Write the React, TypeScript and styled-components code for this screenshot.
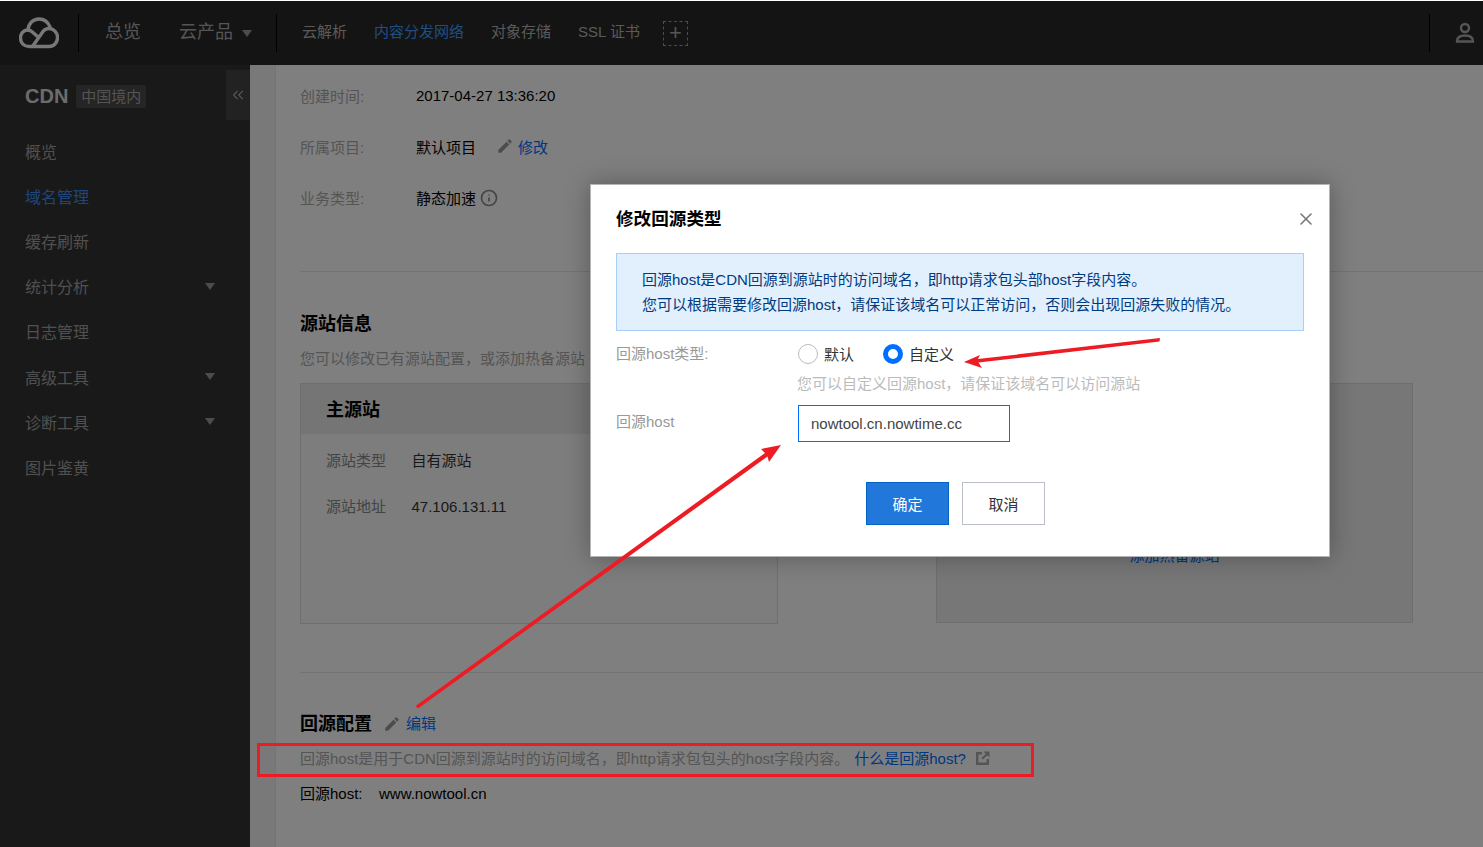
import styled, { createGlobalStyle } from 'styled-components';
import { ChevronsLeft, Info, X } from 'lucide-react';
import { MdEdit } from 'react-icons/md';

const FONT = '"Liberation Sans", "Noto Sans CJK SC", Arial, sans-serif';
const BLUE = '#006eff';

const GlobalStyle = createGlobalStyle`
    html, body {
        margin: 0;
        height: 100%;
        overflow: hidden;
        font-family: ${FONT};
        font-size: 15px;
        background: #fff;
    }
    * { box-sizing: border-box; }
`;

const Page = styled.div`
    width: 1483px;
    height: 847px;
    position: relative;
    display: flex;
    flex-direction: column;
    overflow: hidden;
    padding-top: 1px;
`;

const TopBar = styled.header`
    height: 64px;
    flex: none;
    background: #282828;
    display: flex;
    align-items: center;
    padding-left: 19px;
`;

const Logo = styled.svg`
    width: 40px;
    height: 32px;
    flex: none;
`;

const BarDivider = styled.span`
    width: 1px;
    height: 38px;
    background: #000;
    flex: none;
    margin: ${p => p.$margin};
`;

const PrimaryLink = styled.a`
    font-size: 18px;
    color: #aaa;
    margin-right: ${p => p.$gap || 0}px;
    display: flex;
    align-items: center;
    line-height: 24px;
`;

const PrimaryText = styled.span`
    margin-bottom: 3px;
`;

const SubLink = styled.a`
    font-size: 15px;
    line-height: 22px;
    margin-bottom: 3px;
    color: ${p => (p.$active ? '#3e9cff' : '#b4b4b4')};
    margin-right: 27px;
`;

const Caret = styled.i`
    display: block;
    width: 0;
    height: 0;
    border-left: 5px solid transparent;
    border-right: 5px solid transparent;
    border-top: 7px solid ${p => p.$color || '#999'};
    margin-left: ${p => p.$left || 0}px;
`;

const AddBox = styled.span`
    width: 25px;
    height: 25px;
    border: 1px dashed #999;
    color: #aaa;
    font-size: 22px;
    line-height: 22px;
    text-align: center;
    margin-left: -4px;
`;

const UserIcon = styled.svg`
    width: 20px;
    height: 22px;
    margin: 0 8px 0 25px;
    flex: none;
`;

const Spacer = styled.div`
    flex: 1;
`;

const Body = styled.div`
    flex: 1;
    display: flex;
    min-height: 0;
`;

const Sidebar = styled.aside`
    width: 250px;
    flex: none;
    background: #323232;
    position: relative;
`;

const SideHead = styled.div`
    height: 63px;
    display: flex;
    align-items: center;
    padding-left: 25px;
    gap: 8px;
`;

const SideTitle = styled.b`
    font-size: 20px;
    color: #d8d8d8;
`;

const RegionTag = styled.span`
    background: #4a4a4a;
    color: #a8a8a8;
    font-size: 15px;
    line-height: 23px;
    padding: 0 5px;
    border-radius: 2px;
`;

const Collapse = styled.button`
    position: absolute;
    right: 0;
    top: 5px;
    width: 24px;
    height: 50px;
    border: 0;
    padding: 0;
    background: #444;
    color: #aaa;
    display: flex;
    align-items: center;
    justify-content: center;
`;

const SideMenu = styled.nav`
    display: flex;
    flex-direction: column;
`;

const SideItem = styled.a`
    height: 45.2px;
    display: flex;
    align-items: center;
    justify-content: space-between;
    padding: 0 35px 0 25px;
    font-size: 16px;
    color: ${p => (p.$active ? '#3e8cf0' : '#a0a0a0')};
`;

const Content = styled.main`
    flex: 1;
    display: flex;
    min-width: 0;
    background: #fff;
`;

const Gutter = styled.div`
    width: 26px;
    flex: none;
    background: #f3f3f3;
    border-right: 1px solid #e8e8e8;
`;

const Detail = styled.div`
    flex: 1;
    padding: 19px 0 0 24px;
`;

const Row = styled.div`
    display: flex;
    align-items: center;
    height: 22px;
    margin-bottom: 29px;
    color: #000;
`;

const RowLabel = styled.span`
    width: 116px;
    color: #aaa;
    flex: none;
`;

const EditLink = styled.a`
    color: ${BLUE};
    display: inline-flex;
    align-items: center;
    gap: ${p => p.$gap}px;
    margin-left: ${p => p.$left}px;
    font-size: 15px;
    font-weight: 400;
    svg { color: #999; }
`;

const InfoMark = styled(Info)`
    color: #888;
    margin: 2px 0 0 4px;
`;

const Rule = styled.hr`
    border: 0;
    height: 1px;
    background: #e6e6e6;
    margin: ${p => p.$margin};
`;

const SectionTitle = styled.h2`
    margin: 0;
    font-size: 18px;
    line-height: 26px;
    font-weight: 700;
    color: #000;
    display: flex;
    align-items: center;
`;

const Muted = styled.p`
    margin: ${p => p.$margin};
    line-height: 22px;
    color: #aaa;
    display: flex;
    align-items: center;
`;

const Panels = styled.div`
    display: flex;
    align-items: flex-start;
    gap: 158px;
    margin-top: 13px;
`;

const Panel = styled.section`
    width: ${p => p.$width}px;
    height: ${p => p.$height}px;
    border: 1px solid #ddd;
    background: ${p => p.$tone};
    position: relative;
`;

const PanelHead = styled.div`
    height: 50px;
    background: #ebebeb;
    padding-left: 25px;
    font-size: 18px;
    font-weight: 700;
    line-height: 52px;
    color: #000;
`;

const PanelRows = styled.div`
    padding: 16px 0 0 25px;
    display: flex;
    flex-direction: column;
    gap: 24px;
`;

const PanelRow = styled.div`
    display: flex;
    line-height: 22px;
    color: #333;
`;

const PanelLabel = styled.span`
    width: 85.5px;
    color: #888;
`;

const AddSource = styled.a`
    position: absolute;
    left: 0;
    right: 0;
    top: 161px;
    text-align: center;
    color: ${BLUE};
    line-height: 22px;
`;

const HelpLink = styled.a`
    color: ${BLUE};
    margin-left: 5px;
`;

const External = styled.svg`
    width: 14px;
    height: 14px;
    margin: 0 0 2px 10px;
`;

const HostRow = styled.div`
    margin-top: 13px;
    line-height: 22px;
    color: #000;
    display: flex;
`;

const HostLabel = styled.span`
    width: 79px;
`;

const Mask = styled.div`
    position: absolute;
    inset: 1px 0 0 0;
    background: rgba(0, 0, 0, 0.5);
`;

const Modal = styled.div`
    position: absolute;
    left: 590px;
    top: 184px;
    width: 740px;
    height: 373px;
    background: #fff;
    border: 1px solid #b4b4b4;
    box-shadow: 0 0 24px rgba(0, 0, 0, 0.3);
    padding: 0 25px;
`;

const ModalTitle = styled.h3`
    margin: 0;
    padding-top: 21px;
    font-size: 17.6px;
    line-height: 26px;
    font-weight: 700;
    color: #000;
`;

const CloseBtn = styled.button`
    position: absolute;
    right: 13px;
    top: 24px;
    border: 0;
    padding: 0;
    background: none;
    color: #777;
    display: flex;
`;

const Notice = styled.div`
    margin-top: 21px;
    height: 78px;
    background: #e2effd;
    border: 1px solid #a8d0fb;
    padding: 13px 25px;
    line-height: 25px;
    color: #003b80;
`;

const FormRow = styled.div`
    display: flex;
    margin-top: ${p => p.$top}px;
`;

const FormLabel = styled.label`
    width: 182px;
    flex: none;
    color: #999;
    line-height: ${p => p.$height}px;
`;

const RadioGroup = styled.div`
    display: flex;
    align-items: center;
    height: 22px;
    color: #333;
`;

const Radio = styled.span`
    width: 20px;
    height: 20px;
    border-radius: 50%;
    flex: none;
    margin-right: 6px;
    border: ${p => (p.$on ? `5px solid ${BLUE}` : '1px solid #bbb')};
`;

const RadioText = styled.span`
    margin-right: ${p => p.$gap}px;
    margin-bottom: 2px;
`;

const Hint = styled.div`
    margin: 8px 0 0 181px;
    line-height: 22px;
    color: #bbb;
`;

const HostInput = styled.input`
    width: 212px;
    height: 37px;
    border: 1px solid ${BLUE};
    padding: 0 12px 1px;
    font-family: ${FONT};
    font-size: 15px;
    color: #444;
    outline: none;
`;

const Actions = styled.div`
    display: flex;
    justify-content: center;
    gap: 13px;
    margin-top: 40px;
    padding-right: 9px;
`;

const ModalButton = styled.button`
    width: 83px;
    height: 43px;
    font-family: ${FONT};
    font-size: 15px;
    border: 1px solid ${p => (p.$primary ? '#0063c7' : '#bbc0c8')};
    background: ${p => (p.$primary ? '#2277da' : '#fff')};
    color: ${p => (p.$primary ? '#fff' : '#333')};
`;

const Annotations = styled.svg`
    position: absolute;
    inset: 0;
    width: 1483px;
    height: 847px;
    pointer-events: none;
`;

const sideItems: [string, boolean?, boolean?][] = [
    ['概览'],
    ['域名管理', true],
    ['缓存刷新'],
    ['统计分析', false, true],
    ['日志管理'],
    ['高级工具', false, true],
    ['诊断工具', false, true],
    ['图片鉴黄'],
];

export default function App() {
    return (
        <Page>
            <GlobalStyle />
            <TopBar>
                <Logo viewBox="19 17 40 32" fill="none" stroke="#f0f0f0" strokeWidth="3.4" strokeLinecap="round">
                    <path d="M28 30C28.5 23.5 33 19 39 19C44 19 48 22 50 27" />
                    <path d="M37.5 36.5L33 32.5C31.5 31 29.5 30 27.5 30C23.5 30 20.5 33.5 20.5 38C20.5 43 24 46.5 29 46.5H49C54 46.5 57.5 42.5 57.5 37.5C57.5 32.5 53.5 28.5 49 28.5C46.5 28.5 44.5 29.5 43 31.5L33.5 45" />
                </Logo>
                <BarDivider $margin="0 26px 0 19px" />
                <PrimaryLink $gap={38}><PrimaryText>总览</PrimaryText></PrimaryLink>
                <PrimaryLink><PrimaryText>云产品</PrimaryText><Caret $left={9} /></PrimaryLink>
                <BarDivider $margin="0 25px 0 24px" />
                <SubLink>云解析</SubLink>
                <SubLink $active>内容分发网络</SubLink>
                <SubLink>对象存储</SubLink>
                <SubLink>SSL 证书</SubLink>
                <AddBox>+</AddBox>
                <Spacer />
                <BarDivider $margin="0" />
                <UserIcon viewBox="0 0 20 22" fill="none" stroke="#aaa" strokeWidth="2.4">
                    <circle cx="10" cy="6" r="4" />
                    <path d="M2 19.5C2 15 5 13.5 10 13.5C15 13.5 18 15 18 19.5Z" />
                </UserIcon>
            </TopBar>
            <Body>
                <Sidebar>
                    <SideHead>
                        <SideTitle>CDN</SideTitle>
                        <RegionTag>中国境内</RegionTag>
                    </SideHead>
                    <Collapse><ChevronsLeft size={18} strokeWidth={1.5} /></Collapse>
                    <SideMenu>
                        {sideItems.map(([name, active, more]) => (
                            <SideItem key={name} $active={active}>
                                {name}
                                {more && <Caret $color="#999" />}
                            </SideItem>
                        ))}
                    </SideMenu>
                </Sidebar>
                <Content>
                    <Gutter />
                    <Detail>
                        <Row><RowLabel>创建时间:</RowLabel>2017-04-27 13:36:20</Row>
                        <Row>
                            <RowLabel>所属项目:</RowLabel>默认项目
                            <EditLink $left={20} $gap={4}><MdEdit size={18} />修改</EditLink>
                        </Row>
                        <Row><RowLabel>业务类型:</RowLabel>静态加速<InfoMark size={18} strokeWidth={2.2} /></Row>
                        <Rule $margin="63px 0 39px" />
                        <SectionTitle>源站信息</SectionTitle>
                        <Muted $margin="11px 0 0">您可以修改已有源站配置，或添加热备源站</Muted>
                        <Panels>
                            <Panel $width={478} $height={241} $tone="#fbfbfb">
                                <PanelHead>主源站</PanelHead>
                                <PanelRows>
                                    <PanelRow><PanelLabel>源站类型</PanelLabel>自有源站</PanelRow>
                                    <PanelRow><PanelLabel>源站地址</PanelLabel>47.106.131.11</PanelRow>
                                </PanelRows>
                            </Panel>
                            <Panel $width={477} $height={240} $tone="#eeeeee">
                                <AddSource>添加热备源站</AddSource>
                            </Panel>
                        </Panels>
                        <Rule $margin="48px 0 38px" />
                        <SectionTitle>
                            回源配置
                            <EditLink $left={11} $gap={5}><MdEdit size={18} />编辑</EditLink>
                        </SectionTitle>
                        <Muted $margin="11px 0 0">
                            回源host是用于CDN回源到源站时的访问域名，即http请求包包头的host字段内容。
                            <HelpLink>什么是回源host?</HelpLink>
                            <External viewBox="0 0 14 14">
                                <path fill="none" stroke="#aaa" strokeWidth="2.4" d="M6 2.2H1.2V12.8H11.8V8" />
                                <path fill="#aaa" d="M7.5 0.5H13.5V6.5L11.3 4.3L7 8.6L5.4 7L9.7 2.7Z" />
                            </External>
                        </Muted>
                        <HostRow><HostLabel>回源host:</HostLabel>www.nowtool.cn</HostRow>
                    </Detail>
                </Content>
            </Body>
            <Mask />
            <Modal>
                <ModalTitle>修改回源类型</ModalTitle>
                <CloseBtn><X size={20} strokeWidth={1.9} /></CloseBtn>
                <Notice>
                    回源host是CDN回源到源站时的访问域名，即http请求包头部host字段内容。<br />
                    您可以根据需要修改回源host，请保证该域名可以正常访问，否则会出现回源失败的情况。
                </Notice>
                <FormRow $top={12}>
                    <FormLabel $height={22}>回源host类型:</FormLabel>
                    <RadioGroup>
                        <Radio />
                        <RadioText $gap={29}>默认</RadioText>
                        <Radio $on />
                        <RadioText $gap={0}>自定义</RadioText>
                    </RadioGroup>
                </FormRow>
                <Hint>您可以自定义回源host，请保证该域名可以访问源站</Hint>
                <FormRow $top={10}>
                    <FormLabel $height={33}>回源host</FormLabel>
                    <HostInput defaultValue="nowtool.cn.nowtime.cc" />
                </FormRow>
                <Actions>
                    <ModalButton $primary>确定</ModalButton>
                    <ModalButton>取消</ModalButton>
                </Actions>
            </Modal>
            <Annotations viewBox="0 0 1483 847">
                <rect x="258.5" y="744.5" width="774" height="31" fill="none" stroke="#ed1c24" strokeWidth="3" />
                <polygon fill="#ed1c24" points="1160,338 1159.5,341.5 978.5,362.5 982,368 964,362 980,355 978,359" />
                <polygon fill="#ed1c24" points="415.5,706 418,708.5 767.5,456.5 769,462 781,445 761,449 765,453" />
            </Annotations>
        </Page>
    );
}
